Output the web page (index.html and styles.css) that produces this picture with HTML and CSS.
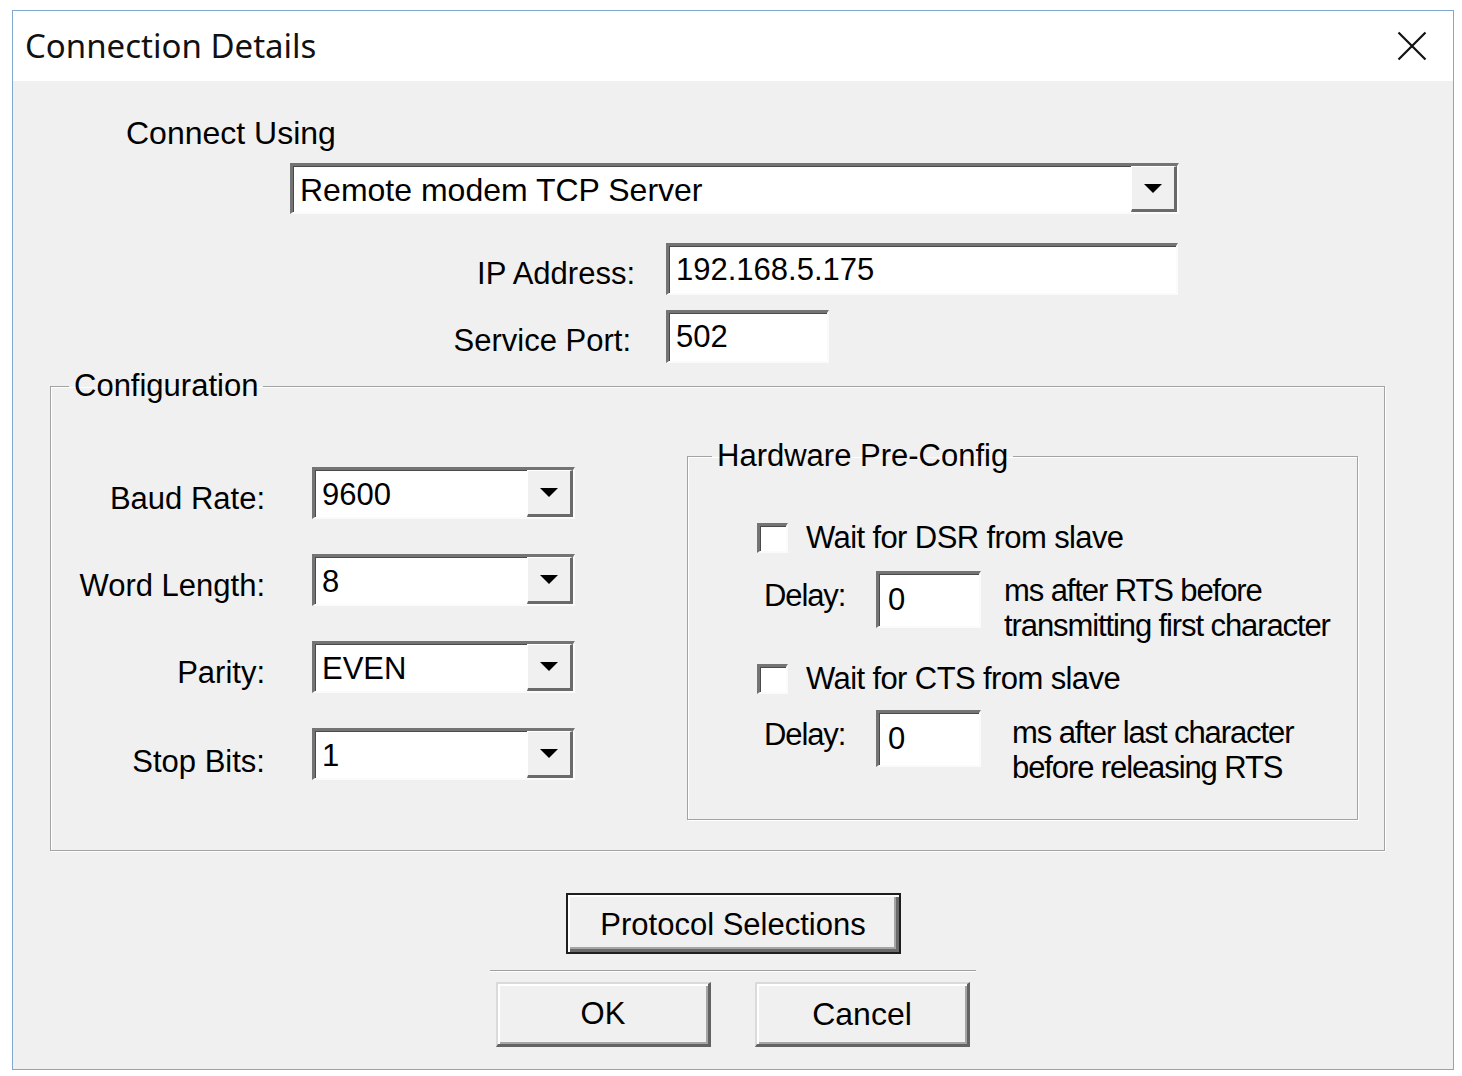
FILE: index.html
```html
<!DOCTYPE html>
<html lang="en">

<head>
  <meta charset="UTF-8">
  <title>Connection Details</title>
  <link rel="stylesheet" href="styles.css">
</head>

<body>
  <div class="window">
    <div class="titlebar">
      <span class="title">Connection Details</span>
      <span class="close">
        <svg width="30" height="30" viewBox="0 0 30 30">
          <path d="M1.5 1.5 L28.5 28.5 M28.5 1.5 L1.5 28.5" stroke="#111" stroke-width="2.2" fill="none" />
        </svg>
      </span>
    </div>

    <div class="dialog">
      <div class="connect-label">Connect Using</div>
      <div class="combo combo-wide">
        <span class="combo-value">Remote modem TCP Server</span>
        <span class="combo-btn"><i class="arrow"></i></span>
      </div>

      <div class="field-row ip-row">
        <label>IP Address:</label>
        <div class="edit edit-ip">192.168.5.175</div>
      </div>
      <div class="field-row port-row">
        <label>Service Port:</label>
        <div class="edit edit-port">502</div>
      </div>

      <fieldset class="group config">
        <legend>Configuration</legend>
        <div class="config-inner">
          <div class="serial-grid">
            <label>Baud Rate:</label>
            <div class="combo combo-sm">
              <span class="combo-value">9600</span>
              <span class="combo-btn"><i class="arrow"></i></span>
            </div>
            <label>Word Length:</label>
            <div class="combo combo-sm">
              <span class="combo-value">8</span>
              <span class="combo-btn"><i class="arrow"></i></span>
            </div>
            <label>Parity:</label>
            <div class="combo combo-sm">
              <span class="combo-value">EVEN</span>
              <span class="combo-btn"><i class="arrow"></i></span>
            </div>
            <label class="stop-label">Stop Bits:</label>
            <div class="combo combo-sm">
              <span class="combo-value">1</span>
              <span class="combo-btn"><i class="arrow"></i></span>
            </div>
          </div>

          <fieldset class="group hardware">
            <legend>Hardware Pre-Config</legend>
            <div class="check-row dsr-row">
              <span class="checkbox"></span>
              <span class="check-label">Wait for DSR from slave</span>
            </div>
            <div class="delay-row delay-first">
              <span class="delay-label">Delay:</span>
              <div class="edit edit-delay">0</div>
              <div class="delay-desc">ms after RTS before<br>transmitting first character</div>
            </div>
            <div class="check-row cts-row">
              <span class="checkbox"></span>
              <span class="check-label">Wait for CTS from slave</span>
            </div>
            <div class="delay-row delay-second">
              <span class="delay-label">Delay:</span>
              <div class="edit edit-delay">0</div>
              <div class="delay-desc">ms after last character<br>before releasing RTS</div>
            </div>
          </fieldset>
        </div>
      </fieldset>

      <div class="actions">
        <div class="btn btn-default">Protocol Selections</div>
        <div class="separator"></div>
        <div class="btn-row">
          <div class="btn">OK</div>
          <div class="btn btn-cancel">Cancel</div>
        </div>
      </div>
    </div>
  </div>
</body>

</html>
```

FILE: styles.css
```css
body {
  margin: 0;
  background: #fff;
  font-family: "Liberation Sans", Arial, sans-serif;
  color: #000;
}
.window {
  margin: 10px 0 0 12px;
  width: 1442px;
  height: 1060px;
  box-sizing: border-box;
  border: 1px solid #7fa9cf;
  background: #f0f0f0;
  display: flex;
  flex-direction: column;
}
.titlebar {
  height: 70px;
  flex: none;
  background: #fff;
  display: flex;
  align-items: center;
  justify-content: space-between;
  padding: 0 26px 0 12px;
}
.title {
  font-family: "Noto Sans", sans-serif;
  font-size: 33px;
  color: #111;
  margin-top: -2px;
}
.close svg {
  display: block;
}
.dialog {
  flex: 1;
  font-size: 31px;
  line-height: 36px;
}
.connect-label {
  margin: 34px 0 0 113px;
  font-size: 32px;
}

/* sunken and raised 3d edges */
.combo, .edit, .checkbox {
  box-sizing: border-box;
  background: #fff;
  border-style: solid;
  border-width: 3px 2px 2px 3px;
  border-color: #747474 #fbfbfb #fbfbfb #747474;
  box-shadow: inset 1px 1px 0 #4a4a4a;
}
.combo {
  display: flex;
}
.combo-wide {
  margin: 12px 0 0 277px;
  width: 889px;
  height: 51px;
}
.combo-wide .combo-value {
  font-size: 32px;
  padding-top: 6px;
}
.combo-value {
  flex: 1;
  padding: 7px 0 0 7px;
}
.combo-btn {
  width: 46px;
  box-sizing: border-box;
  background: #f0f0f0;
  border-style: solid;
  border-width: 1px 3px 3px 1px;
  border-color: #fff #6a6a6a #6a6a6a #fff;
  display: flex;
  align-items: center;
  justify-content: center;
}
.arrow {
  width: 0;
  height: 0;
  border-left: 9px solid transparent;
  border-right: 9px solid transparent;
  border-top: 9px solid #000;
}

.field-row {
  display: grid;
  grid-template-columns: 622px auto;
  column-gap: 31px;
  align-items: start;
}
.field-row label {
  justify-self: end;
  margin-top: 13px;
}
.ip-row {
  margin-top: 29px;
}
.port-row {
  margin-top: 15px;
}
.port-row label {
  margin-right: 4px;
}
.edit {
  padding: 6px 0 0 7px;
}
.edit-ip {
  width: 512px;
  height: 52px;
}
.edit-port {
  width: 163px;
  height: 53px;
}

.group {
  margin: 0;
  padding: 0;
  min-width: 0;
  box-sizing: border-box;
  border: 1px solid #a3a3a3;
  box-shadow: inset 1px 1px 0 #fff, 1px 1px 0 #fff;
}
.group legend {
  padding: 0 5px;
  line-height: 36px;
}
.config {
  margin: 5px 0 0 37px;
  width: 1335px;
  height: 483px;
}
.config legend {
  margin-left: 18px;
}
.config-inner {
  display: flex;
  align-items: flex-start;
}
.serial-grid {
  display: grid;
  grid-template-columns: 214px 263px;
  grid-auto-rows: 52px;
  column-gap: 47px;
  row-gap: 35px;
  margin-top: 63px;
}
.serial-grid label {
  justify-self: end;
  margin-top: 14px;
}
.serial-grid .stop-label {
  margin-top: 16px;
}

.hardware {
  margin: 34px 0 0 112px;
  width: 671px;
  height: 382px;
}
.hardware legend {
  margin-left: 24px;
}
.check-row {
  display: flex;
  align-items: center;
  margin-left: 69px;
}
.dsr-row {
  margin-top: 46px;
}
.cts-row {
  margin-top: 18px;
}
.checkbox {
  width: 31px;
  height: 30px;
}
.check-label {
  margin-left: 18px;
  letter-spacing: -0.6px;
}
.delay-row {
  display: flex;
  align-items: flex-start;
  margin-left: 76px;
  letter-spacing: -1.1px;
}
.delay-first {
  margin-top: 15px;
}
.delay-second {
  margin-top: 13px;
}
.delay-label {
  width: 112px;
  margin-top: 7px;
}
.edit-delay {
  width: 105px;
  height: 57px;
  padding: 8px 0 0 9px;
}
.delay-desc {
  line-height: 35px;
  margin: 2px 0 0 23px;
}
.delay-second .delay-desc {
  margin: 5px 0 0 31px;
}

.actions {
  display: flex;
  flex-direction: column;
  align-items: center;
  margin-top: 42px;
}
.btn {
  box-sizing: border-box;
  display: flex;
  align-items: center;
  justify-content: center;
  background: #f0f0f0;
  border-style: solid;
  border-width: 2px 3px 3px 2px;
  border-color: #dadada #636363 #636363 #dadada;
  box-shadow: inset 2px 2px 0 #fff, inset -2px -2px 0 #a5a5a5;
}
.btn-default {
  width: 335px;
  height: 61px;
  padding-top: 3px;
  border: 2px solid #1e1e1e;
  box-shadow: inset 2px 2px 0 #fff, inset -3px -3px 0 #6a6a6a, inset -5px -5px 0 #a5a5a5;
}
.separator {
  width: 486px;
  height: 1px;
  margin-top: 16px;
  background: #a0a0a0;
  border-bottom: 1px solid #fff;
}
.btn-row {
  display: flex;
  gap: 44px;
  margin-top: 10px;
}
.btn-row .btn {
  width: 215px;
  height: 65px;
}
.btn-cancel {
  font-size: 32px;
}
```
